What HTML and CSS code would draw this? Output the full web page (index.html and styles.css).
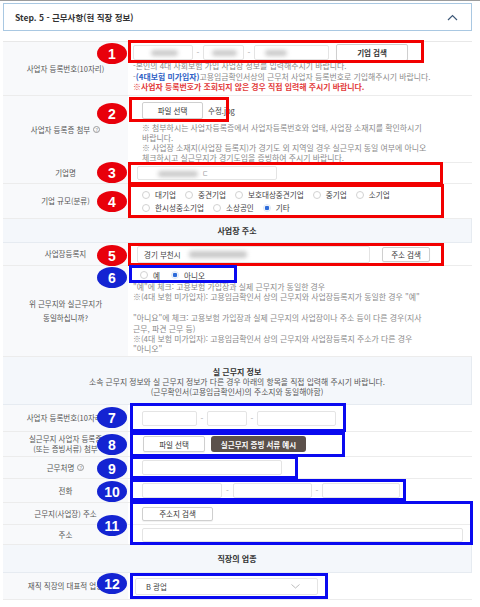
FILE: index.html
```html
<!DOCTYPE html>
<html lang="ko">
<head>
<meta charset="utf-8">
<title>Step 5</title>
<link rel="stylesheet" href="styles.css">
</head>
<body>
<div class="page">
  <div class="head">
    <span>Step. 5 - 근무사항(현 직장 정보)</span>
    <svg class="chev" width="11" height="7" viewBox="0 0 11 7"><polyline points="1,6 5.5,1.5 10,6" fill="none" stroke="#3d5878" stroke-width="1.2"/></svg>
  </div>

  <div class="table">
    <div class="row h-r1">
      <div class="lbl">사업자 등록번호(10자리)</div>
      <div class="cell c-r1">
        <div class="fline">
          <div class="inp w60"><span class="blob b1"></span></div><span class="dash">-</span>
          <div class="inp w41"><span class="blob b2"></span></div><span class="dash">-</span>
          <div class="inp w75"><span class="blob b3"></span></div>
          <button class="btn btn-search">기업 검색</button>
        </div>
        <div class="notes">
          <div>-본인의 4대 사회보험 가입 사업장 정보를 입력해주시기 바랍니다.</div>
          <div>-<span class="blue">(4대보험 미가입자)</span>고용임금확인서상의 근무처 사업자 등록번호로 기입해주시기 바랍니다.</div>
          <div class="red">※사업자 등록번호가 조회되지 않은 경우 직접 입력해 주시기 바랍니다.</div>
        </div>
      </div>
    </div>

    <div class="row h-r2">
      <div class="lbl">사업자 등록증 첨부 <span class="q">?</span></div>
      <div class="cell c-r2">
        <div class="fline">
          <button class="btn btn-file">파일 선택</button><span class="fname">수정.jpg</span>
        </div>
        <div class="notes n10">
          <div>※ 첨부하시는 사업자등록증에서 사업자등록번호와 업태, 사업장 소재지를 확인하시기</div>
          <div>바랍니다.</div>
          <div>※ 사업장 소재지(사업장 등록지)가 경기도 외 지역일 경우 실근무지 동일 여부에 아니오</div>
          <div>체크하시고 실근무지가 경기도임을 증빙하여 주시기 바랍니다.</div>
        </div>
      </div>
    </div>

    <div class="row h-r3">
      <div class="lbl">기업명</div>
      <div class="cell c-mid pl9">
        <div class="inp w140 h14"><span class="blob b4"></span><span class="tail">ㄷ</span></div>
      </div>
    </div>

    <div class="row h-r4">
      <div class="lbl">기업 규모(분류)</div>
      <div class="cell c-mid pl14">
        <div class="radios">
          <div class="rline">
            <label class="ritem"><span class="radio"></span>대기업</label>
            <label class="ritem"><span class="radio"></span>중견기업</label>
            <label class="ritem"><span class="radio"></span>보호대상중견기업</label>
            <label class="ritem"><span class="radio"></span>중기업</label>
            <label class="ritem"><span class="radio"></span>소기업</label>
          </div>
          <div class="rline">
            <label class="ritem"><span class="radio"></span>한시성중소기업</label>
            <label class="ritem"><span class="radio"></span>소상공인</label>
            <label class="ritem"><span class="radio on"></span>기타</label>
          </div>
        </div>
      </div>
    </div>

    <div class="sect h-s1"><div class="stitle">사업장 주소</div></div>

    <div class="row h-r5">
      <div class="lbl">사업장등록지</div>
      <div class="cell c-mid pl9">
        <div class="inp w233 h17 txt">경기 부천시<span class="blob b5"></span></div>
        <button class="btn btn-addr">주소 검색</button>
      </div>
    </div>

    <div class="row h-r6">
      <div class="lbl">위 근무지와 실근무지가<br>동일하십니까?</div>
      <div class="cell c-r6">
        <div class="rline r6line">
          <label class="ritem"><span class="radio"></span>예</label>
          <label class="ritem"><span class="radio on"></span>아니오</label>
        </div>
        <div class="notes n104">
          <div>"예"에 체크: 고용보험 가입장과 실제 근무지가 동일한 경우</div>
          <div>※(4대 보험 미가입자): 고용임금확인서 상의 근무지와 사업장등록지가 동일한 경우 "예"</div>
          <div>&nbsp;</div>
          <div>"아니요"에 체크: 고용보험 가입장과 실제 근무지의 사업장이나 주소 등이 다른 경우(지사</div>
          <div>근무, 파견 근무 등)</div>
          <div>※(4대 보험 미가입자): 고용임금확인서 상의 근무지와 사업장등록지 주소가 다른 경우</div>
          <div>"아니오"</div>
        </div>
      </div>
    </div>

    <div class="sect h-s2 s2">
      <div class="stitle">실 근무지 정보</div>
      <div class="ssub">소속 근무지 정보와 실 근무지 정보가 다른 경우 아래의 항목을 직접 입력해 주시기 바랍니다.</div>
      <div class="ssub">(근무확인서(고용임금확인서)의 주소지와 동일해야함)</div>
    </div>

    <div class="row h-r7">
      <div class="lbl">사업자 등록번호(10자리)</div>
      <div class="cell c-mid pl14">
        <div class="inp w55 h15"></div><span class="dash">-</span>
        <div class="inp w40 h15"></div><span class="dash">-</span>
        <div class="inp w79 h15"></div>
      </div>
    </div>

    <div class="row h-r8">
      <div class="lbl lh10">실근무지 사업자 등록증<br>(또는 증빙서류) 첨부</div>
      <div class="cell c-mid pl15">
        <button class="btn btn-file2">파일 선택</button>
        <button class="btn-dark">실근무지 증빙 서류 예시</button>
      </div>
    </div>

    <div class="row h-r9">
      <div class="lbl">근무처명 <span class="q">?</span></div>
      <div class="cell c-mid pl14">
        <div class="inp w140 h15"></div>
      </div>
    </div>

    <div class="row h-r10">
      <div class="lbl">전화</div>
      <div class="cell c-mid pl14">
        <div class="inp w80 h15"></div><span class="dash w11">-</span>
        <div class="inp w79 h15"></div><span class="dash">-</span>
        <div class="inp w78 h15"></div>
      </div>
    </div>

    <div class="row h-r11a">
      <div class="lbl">근무지(사업장) 주소</div>
      <div class="cell c-mid pl14">
        <button class="btn btn-zip">주소지 검색</button>
      </div>
    </div>

    <div class="row h-r11b">
      <div class="lbl">주소</div>
      <div class="cell c-mid pl14">
        <div class="inp w321 h14"></div>
      </div>
    </div>

    <div class="sect h-s3"><div class="stitle">직장의 업종</div></div>

    <div class="row h-r12">
      <div class="lbl">재직 직장의 대표적 업종</div>
      <div class="cell c-mid pl7">
        <div class="select">
          <span>B 광업</span>
          <svg width="9" height="5" viewBox="0 0 9 5"><polyline points="0.5,0.5 4.5,4 8.5,0.5" fill="none" stroke="#b5b5b5" stroke-width="0.9"/></svg>
        </div>
      </div>
    </div>
  </div>

  <div class="marks">
    <div class="box red m-r1"></div>
    <div class="box red m-r2"></div>
    <div class="box red m-r3"></div>
    <div class="box red m-r4"></div>
    <div class="box red m-r5"></div>
    <div class="box blue m-b6"></div>
    <div class="box blue m-b7"></div>
    <div class="box blue m-b8"></div>
    <div class="box blue m-b9"></div>
    <div class="box blue m-b10"></div>
    <div class="box blue m-b11"></div>
    <div class="box blue m-b12"></div>

    <div class="num nred n1">1</div>
    <div class="num nred n2">2</div>
    <div class="num nred n3">3</div>
    <div class="num nred n4">4</div>
    <div class="num nred n5">5</div>
    <div class="num nblue n6">6</div>
    <div class="num nblue n7">7</div>
    <div class="num nblue n8">8</div>
    <div class="num nblue n9">9</div>
    <div class="num nblue n10">10</div>
    <div class="num nblue n11">11</div>
    <div class="num nblue n12">12</div>
  </div>
</div>
</body>
</html>
```

FILE: styles.css
```css
* { box-sizing: border-box; margin: 0; padding: 0; }
html, body { background: #fff; }
body {
  margin: 0;
  font-family: "Noto Sans CJK KR", "Noto Sans", sans-serif;
  color: #555;
}
.page {
  position: relative;
  width: 480px;
  height: 607px;
  overflow: hidden;
  border-top: 1px solid #9c9c9c;
  padding: 2px 8px 0 3px;
}

/* header */
.head {
  height: 28px;
  border: 1px solid #a9c8e2;
  display: flex;
  align-items: center;
  justify-content: space-between;
  padding: 0 13px 0 11px;
  font-size: 8.5px;
  font-weight: 700;
  color: #333;
}
.chev { display: block; }

/* table */
.table { margin-top: 10px; border-top: 1px solid #e8e8e8; }
.row {
  display: grid;
  grid-template-columns: 125px 1fr;
  border-bottom: 1px solid #ececec;
}
.lbl {
  background: #f8f9fb;
  display: flex;
  align-items: center;
  justify-content: center;
  text-align: center;
  font-size: 7.5px;
  line-height: 14px;
  color: #555;
  white-space: nowrap;
}
.lbl.lh10 { line-height: 10px; padding-top: 0; }
.q {
  display: inline-flex;
  align-items: center;
  justify-content: center;
  width: 7px;
  height: 7px;
  margin-left: 3px;
  border: 0.8px solid #9a9a9a;
  border-radius: 50%;
  font-size: 5px;
  line-height: 1;
  color: #888;
}
.cell { min-width: 0; }
.c-mid { display: flex; align-items: center; }
.pl7 { padding-left: 7px; }
.pl9 { padding-left: 9px; }
.pl14 { padding-left: 14px; }
.pl15 { padding-left: 15px; }

.h-r1 { height: 54px; }
.h-r2 { height: 67px; }
.h-r3 { height: 21px; }
.h-r4 { height: 35px; }
.h-s1 { height: 24px; }
.h-r5 { height: 23px; }
.h-r6 { height: 91px; }
.h-s2 { height: 48px; }
.h-r7 { height: 27px; }
.h-r8 { height: 25px; }
.h-r9 { height: 22px; }
.h-r10 { height: 24px; }
.h-r11a { height: 22px; }
.h-r11b { height: 20px; }
.h-s3 { height: 28px; }
.h-r12 { height: 27px; }

/* section header rows */
.sect {
  background: #f4f7fb;
  border-bottom: 1px solid #e6ebf1;
  border-right: 1px solid #e6ebf1;
  display: flex;
  flex-direction: column;
  align-items: center;
  justify-content: center;
  text-align: center;
}
.stitle { font-size: 8px; font-weight: 700; color: #333; line-height: 10px; }
.ssub { font-size: 7.8px; color: #555; line-height: 10px; white-space: nowrap; }
.s2 { justify-content: flex-start; padding-top: 10px; }

/* inputs */
.fline { display: flex; align-items: center; height: 17px; }
.inp {
  position: relative;
  height: 15px;
  background: #fff;
  border: 1px solid #e4e4e4;
  border-radius: 2px;
  flex: none;
  overflow: hidden;
}
.inp.txt {
  display: flex;
  align-items: center;
  padding-left: 6px;
  font-size: 7.5px;
  color: #444;
}
.h14 { height: 14px; }
.h15 { height: 15px; }
.h17 { height: 17px; }
.w40 { width: 40px; }
.w41 { width: 41px; }
.w55 { width: 55px; }
.w60 { width: 60px; }
.w75 { width: 75px; }
.w78 { width: 78px; }
.w79 { width: 79px; }
.w80 { width: 80px; }
.w140 { width: 140px; }
.w233 { width: 233px; }
.w321 { width: 321px; }
.dash {
  width: 10px;
  text-align: center;
  font-size: 8px;
  color: #aaa;
  flex: none;
}
.dash.w11 { width: 11px; }

.blob {
  position: absolute;
  top: 4px;
  height: 6px;
  background: #c9c9c9;
  border-radius: 3px;
  filter: blur(2px);
}
.b1 { left: 17px; width: 27px; }
.b2 { left: 8px; width: 25px; }
.b3 { left: 10px; width: 22px; }
.b4 { left: 20px; width: 40px; }
.b5 { position: relative; top: 0; display: inline-block; margin-left: 8px; width: 58px; height: 7px; }
.tail { position: absolute; left: 64px; top: 2px; font-size: 7px; color: #999; line-height: 9px; }

/* buttons */
.btn {
  font-family: inherit;
  font-size: 7.5px;
  color: #333;
  background: #fff;
  border: 1px solid #cfcfcf;
  border-radius: 2px;
  box-shadow: 0 1px 1px rgba(0,0,0,0.06);
  flex: none;
}
.btn-search { width: 72px; height: 17px; margin-left: 7px; font-weight: 700; }
.btn-file { width: 61px; height: 17px; }
.btn-file2 { width: 62px; height: 16px; }
.btn-addr { width: 48px; height: 15px; margin-left: 12px; }
.btn-zip { width: 71px; height: 14px; }
.btn-dark {
  font-family: inherit;
  margin-left: 6px;
  width: 95px;
  height: 16px;
  border: none;
  border-radius: 3px;
  background: #5c514b;
  color: #fff;
  font-size: 7.5px;
  font-weight: 700;
}
.fname { margin-left: 5px; font-size: 7.5px; color: #444; }

/* notes */
.notes { font-size: 7.9px; line-height: 10.5px; color: #8a8a8a; white-space: nowrap; }
.notes.n10 { line-height: 10px; margin-top: 4px; }
.notes.n104 { line-height: 10.4px; }
.notes .blue { color: #2f5fc5; font-weight: 700; }
.notes .red { color: #e23a3a; font-weight: 700; }
.c-r1 { padding: 2px 0 0 5px; }
.c-r2 { padding: 6px 0 0 14px; }
.c-r6 { padding: 2px 0 0 5px; }

/* radios */
.radios { display: flex; flex-direction: column; }
.rline { display: flex; align-items: center; gap: 9px; height: 13px; }
.ritem {
  display: flex;
  align-items: center;
  gap: 5px;
  font-size: 7.6px;
  color: #444;
}
.radio {
  width: 8px;
  height: 8px;
  border-radius: 50%;
  border: 1px solid #d2d2d2;
  background: #fff;
  flex: none;
}
.radio.on {
  border-color: #dbe6f5;
  background: radial-gradient(circle, #2d6bd9 0 2px, #fff 2.6px);
}
.r6line { padding-left: 7px; gap: 11px; height: 14px; }

/* select */
.select {
  width: 183px;
  height: 17px;
  border: 1px solid #e4e4e4;
  border-radius: 2px;
  display: flex;
  align-items: center;
  justify-content: space-between;
  padding: 0 17px 0 10px;
  font-size: 7.5px;
  color: #444;
}
.select svg { display: block; }

/* annotation overlays */
.marks { position: absolute; left: 0; top: -1px; width: 480px; height: 607px; pointer-events: none; }
.box { position: absolute; }
.box.red { border: 3px solid #f20000; }
.box.blue { border: 3px solid #0a0af0; }
.m-r1 { left: 128px; top: 40px; width: 296px; height: 23px; }
.m-r2 { left: 129px; top: 97px; width: 100px; height: 25px; }
.m-r3 { left: 128px; top: 162px; width: 315px; height: 23px; }
.m-r4 { left: 128px; top: 184px; width: 316px; height: 34px; }
.m-r5 { left: 128px; top: 243px; width: 316px; height: 23px; }
.m-b6 { left: 129px; top: 265px; width: 108px; height: 18px; }
.m-b7 { left: 130px; top: 403px; width: 216px; height: 29px; }
.m-b8 { left: 130px; top: 432px; width: 215px; height: 25px; }
.m-b9 { left: 130px; top: 456px; width: 168px; height: 23px; }
.m-b10 { left: 130px; top: 479px; width: 276px; height: 22px; }
.m-b11 { left: 130px; top: 501px; width: 343px; height: 44px; }
.m-b12 { left: 130px; top: 573px; width: 198px; height: 26px; }

.num {
  position: absolute;
  left: 97px;
  width: 30px;
  height: 21px;
  border-radius: 50%;
  display: flex;
  align-items: center;
  justify-content: center;
  color: #fff;
  font-family: "Liberation Sans", Arial, sans-serif;
  font-weight: 700;
  font-size: 14px;
  line-height: 1;
}
.nred { background: #e8000b; }
.nblue { background: #1424d2; }
.n1 { top: 43px; }
.n2 { top: 103px; }
.n3 { top: 162px; }
.n4 { top: 191px; }
.n5 { top: 245px; }
.n6 { top: 267px; }
.n7 { top: 407px; }
.n8 { top: 434px; }
.n9 { top: 458px; }
.n10 { top: 481px; }
.n11 { top: 515px; }
.n12 { top: 573px; }
```
